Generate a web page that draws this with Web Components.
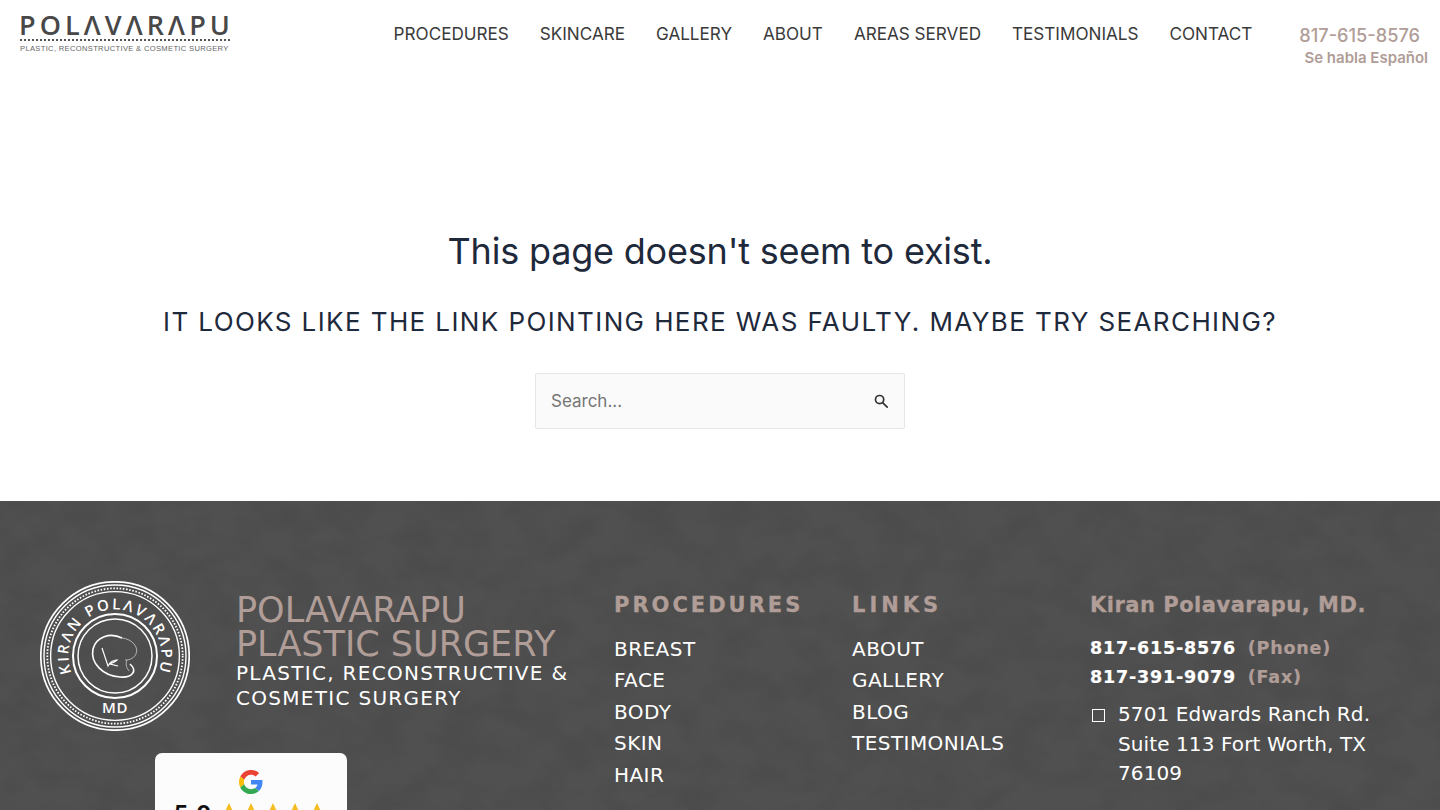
<!DOCTYPE html>
<html lang="en">
<head>
<meta charset="utf-8">
<title>Page not found</title>
<style>
  html, body { margin: 0; height: 810px; overflow: hidden; background: #fff; }
  body { font-family: Inter, "Liberation Sans", sans-serif; }
</style>
</head>
<body>
<site-header></site-header>
<not-found></not-found>
<site-footer></site-footer>

<script>
/* Top bar: logo, main nav, phone */
class SiteHeader extends HTMLElement {
  constructor() {
    super();
    const items = ['PROCEDURES', 'SKINCARE', 'GALLERY', 'ABOUT', 'AREAS SERVED', 'TESTIMONIALS', 'CONTACT'];
    this.attachShadow({ mode: 'open' }).innerHTML = `
      <style>
        :host { display: flex; height: 70px; padding: 0 12px 0 20px; justify-content: space-between; align-items: flex-start; box-sizing: border-box; background: #fff; }
        .logo { display: flex; flex-direction: column; width: 210px; margin-top: 12px; }
        .logo-name { font: 600 27px/26px "Open Sans", sans-serif; letter-spacing: 4.1px; white-space: nowrap; color: #484848; margin-left: -1px; }
        .logo-dots { height: 0; border-top: 2px dotted #555; margin-top: 1px; }
        .logo-sub { font: 400 7.6px/10px "Liberation Sans", sans-serif; letter-spacing: .32px; white-space: nowrap; margin-top: 3px; color: #666; }
        nav { display: flex; gap: 31px; margin-left: auto; margin-top: 23px; }
        a { font-size: 17.12px; line-height: 22px; color: #3a3a3a; text-decoration: none; white-space: nowrap; }
        .phone { display: flex; flex-direction: column; align-items: flex-end; margin-left: 47px; margin-top: 24px; color: #b09d97; font-weight: 500; }
        .num { font-size: 18.2px; line-height: 22px; margin-right: 8px; }
        .hab { font-size: 15px; line-height: 18px; margin-top: 3px; font-weight: 600; }
      </style>
      <div class="logo">
        <span class="logo-name">POLΛVΛRΛPU</span>
        <span class="logo-dots"></span>
        <span class="logo-sub">PLASTIC, RECONSTRUCTIVE &amp; COSMETIC SURGERY</span>
      </div>
      <nav>${items.map(i => `<a href="#">${i}</a>`).join('')}</nav>
      <div class="phone"><span class="num">817-615-8576</span><span class="hab">Se habla Español</span></div>`;
  }
}

/* 404 message with search field */
class NotFound extends HTMLElement {
  constructor() {
    super();
    this.attachShadow({ mode: 'open' }).innerHTML = `
      <style>
        :host { display: flex; flex-direction: column; align-items: center; height: 431px; box-sizing: border-box; padding-top: 156px; color: #1e293b; background: #fff; }
        h1 { font-size: 36px; line-height: 50px; font-weight: 400; letter-spacing: -.2px; margin: 0; }
        h2 { font-size: 26px; line-height: 36px; font-weight: 400; letter-spacing: 1.4px; margin: 28px 0 0; text-transform: uppercase; }
        search-box { margin-top: 33px; }
      </style>
      <h1>This page doesn't seem to exist.</h1>
      <h2>It looks like the link pointing here was faulty. Maybe try searching?</h2>
      <search-box></search-box>`;
  }
}

class SearchBox extends HTMLElement {
  constructor() {
    super();
    this.attachShadow({ mode: 'open' }).innerHTML = `
      <style>
        :host { display: flex; align-items: center; justify-content: space-between; width: 370px; height: 56px; box-sizing: border-box; padding: 0 15px 1px 15px; background: #fafafa; border: 1px solid #e6e6e6; border-radius: 2px; }
        span { font-size: 17px; color: #757575; }
        svg { width: 16px; height: 16px; display: block; margin-top: 1px; }
      </style>
      <span>Search...</span>
      <svg viewBox="0 0 16 16" fill="none" stroke="#333" stroke-width="1.7"><circle cx="6.6" cy="6.6" r="4.1"/><path d="M9.6 9.6l4.6 4.6" stroke-linecap="round"/></svg>`;
  }
}

/* Round badge in the footer */
class FooterSeal extends HTMLElement {
  constructor() {
    super();
    this.attachShadow({ mode: 'open' }).innerHTML = `
      <style>
        :host { display: block; width: 150px; height: 150px; }
        svg { display: block; }
        text { font-family: "Open Sans", sans-serif; fill: #fff; }
      </style>
      <svg width="150" height="150" viewBox="0 0 150 150" fill="none" stroke="#fff">
        <circle cx="75" cy="75" r="74.2" stroke-width="1.7"/>
        <circle cx="75" cy="75" r="71" stroke-width="1.4"/>
        <circle cx="75" cy="75" r="67.7" stroke-width="1.8" stroke-dasharray="1.6 1.6"/>
        <circle cx="75" cy="75" r="64.4" stroke-width="1.4"/>
        <circle cx="75" cy="75" r="42" stroke-width="2"/>
        <circle cx="75" cy="75" r="37" stroke-width="1.5"/>
        <defs><path id="arc" d="M75 121.5a46.5 46.5 0 1 1 0-93a46.5 46.5 0 1 1 0 93"/></defs>
        <text font-size="15" font-weight="600" letter-spacing="2.2" stroke="none"><textPath href="#arc" startOffset="50%" text-anchor="middle">KIRΛN POLΛVΛRΛPU</textPath></text>
        <text x="75" y="132" font-size="15" font-weight="600" letter-spacing=".6" text-anchor="middle" stroke="none">MD</text>
        <path d="M82 57C70 51 56 56 53 68C50 82 63 95 80 96C92 97 98 90 90 83" stroke-width="1.6"/>
        <path d="M82 57C92 58 99 66 96 73C93 79 87 79 85 79M87 79C85 84 87 87 89 90" stroke-width=".8" stroke-opacity=".7"/>
        <path d="M62 67C64 73 66 79 68 85C70 81 74 79 77 79C75 81 72 82 70 83L78 85" stroke-width="1.2"/>
      </svg>`;
  }
}

/* Review card cut off by the bottom of the window */
class GoogleCard extends HTMLElement {
  constructor() {
    super();
    const star = '<svg width="22" height="21" viewBox="0 0 24 23"><path fill="#f5bd22" d="M12 0l3.6 7.6 8.4 1-6.2 5.7 1.7 8.3L12 18.5l-7.5 4.1 1.7-8.3L0 8.6l8.4-1z"/></svg>';
    this.attachShadow({ mode: 'open' }).innerHTML = `
      <style>
        :host { display: flex; flex-direction: column; align-items: center; width: 192px; height: 57px; overflow: hidden; box-sizing: border-box; padding-top: 17px; background: #fcfcfc; border-radius: 7px 7px 0 0; }
        .g { width: 24px; height: 24px; display: block; flex: none; }
        .row { display: flex; align-items: center; margin-top: 6px; flex: none; }
        b { font: 700 22px/26px Inter, sans-serif; letter-spacing: 1px; color: #111; margin-right: 6px; }
      </style>
      <svg class="g" viewBox="0 0 48 48">
        <path fill="#EA4335" d="M24 9.5c3.54 0 6.71 1.22 9.21 3.6l6.85-6.85C35.9 2.38 30.47 0 24 0 14.62 0 6.51 5.38 2.56 13.22l7.98 6.19C12.43 13.72 17.74 9.5 24 9.5z"/>
        <path fill="#4285F4" d="M46.98 24.55c0-1.57-.15-3.09-.38-4.55H24v9.02h12.94c-.58 2.96-2.26 5.48-4.78 7.18l7.73 6c4.51-4.18 7.09-10.36 7.09-17.65z"/>
        <path fill="#FBBC05" d="M10.53 28.59c-.48-1.45-.76-2.99-.76-4.59s.27-3.14.76-4.59l-7.98-6.19C.92 16.46 0 20.12 0 24c0 3.88.92 7.54 2.56 10.78l7.97-6.19z"/>
        <path fill="#34A853" d="M24 48c6.48 0 11.93-2.13 15.89-5.81l-7.73-6c-2.15 1.45-4.92 2.3-8.16 2.3-6.26 0-11.57-4.22-13.47-9.91l-7.98 6.19C6.51 42.62 14.62 48 24 48z"/>
      </svg>
      <div class="row"><b>5.0</b>${star.repeat(5)}</div>`;
  }
}

class SiteFooter extends HTMLElement {
  constructor() {
    super();
    const procs = ['BREAST', 'FACE', 'BODY', 'SKIN', 'HAIR'];
    const links = ['ABOUT', 'GALLERY', 'BLOG', 'TESTIMONIALS'];
    const list = a => `<ul>${a.map(i => `<li>${i}</li>`).join('')}</ul>`;
    this.attachShadow({ mode: 'open' }).innerHTML = `
      <style>
        :host { display: block; position: relative; height: 309px; overflow: hidden; background: #505050; color: #fff; font-family: "DejaVu Sans", Verdana, sans-serif; }
        .tex { position: absolute; inset: 0; width: 100%; height: 100%; }
        .wrap { position: relative; display: grid; grid-template-columns: 150px 424px 238px 238px 1fr; padding: 80px 0 0 40px; }
        footer-seal { grid-column: 1; grid-row: 1; }
        .brand { grid-column: 2; grid-row: 1; padding: 11.5px 0 0 46px; }
        .brand-name { font-size: 35px; line-height: 34px; color: #b09d97; white-space: nowrap; }
        .brand-sub { font-size: 20px; line-height: 25px; letter-spacing: 1.3px; width: 345px; }
        google-card { grid-column: 1 / 3; grid-row: 2; margin: 22px 0 0 115px; }
        .col { grid-row: 1 / 3; padding-top: 11px; }
        h4 { margin: 0; font-size: 21px; line-height: 26px; font-weight: 700; color: #b09d97; letter-spacing: 3px; white-space: nowrap; -webkit-text-stroke: .3px #b09d97; }
        h4.links { letter-spacing: 4px; }
        ul { list-style: none; margin: 15.7px 0 0; padding: 0; font-size: 20px; line-height: 31.6px; letter-spacing: .45px; white-space: nowrap; }
        h4.name { letter-spacing: .5px; }
        .tel { font-size: 17.5px; line-height: 29px; font-weight: 700; letter-spacing: .8px; white-space: nowrap; -webkit-text-stroke: .2px currentColor; }
        .tel span { color: #b09d97; margin-left: 5px; }
        .tels { margin-top: 16px; }
        .addr { display: flex; margin-top: 8px; font-size: 20px; line-height: 29.5px; letter-spacing: .1px; white-space: nowrap; }
        .box { flex: none; width: 11px; height: 11px; border: 1.5px solid #fff; margin: 9px 13px 0 2px; }
      </style>
      <svg class="tex" aria-hidden="true">
        <filter id="n" x="0" y="0" width="100%" height="100%">
          <feTurbulence type="fractalNoise" baseFrequency=".025 .035" numOctaves="5" seed="7"/>
          <feColorMatrix values="0 0 0 0 0  0 0 0 0 0  0 0 0 0 0  .9 0 0 0 -.33"/>
        </filter>
        <rect width="100%" height="100%" filter="url(#n)" opacity=".13"/>
      </svg>
      <div class="wrap">
        <footer-seal></footer-seal>
        <div class="brand">
          <div class="brand-name">POLAVARAPU<br>PLASTIC SURGERY</div>
          <div class="brand-sub">PLASTIC, RECONSTRUCTIVE &amp; COSMETIC SURGERY</div>
        </div>
        <div class="col"><h4>PROCEDURES</h4>${list(procs)}</div>
        <div class="col"><h4 class="links">LINKS</h4>${list(links)}</div>
        <div class="col">
          <h4 class="name">Kiran Polavarapu, MD.</h4>
          <div class="tels">
            <div class="tel">817-615-8576 <span>(Phone)</span></div>
            <div class="tel">817-391-9079 <span>(Fax)</span></div>
          </div>
          <div class="addr"><i class="box"></i><div>5701 Edwards Ranch Rd.<br>Suite 113 Fort Worth, TX<br>76109</div></div>
        </div>
        <google-card></google-card>
      </div>`;
  }
}

customElements.define('site-header', SiteHeader);
customElements.define('search-box', SearchBox);
customElements.define('not-found', NotFound);
customElements.define('footer-seal', FooterSeal);
customElements.define('google-card', GoogleCard);
customElements.define('site-footer', SiteFooter);
</script>
</body>
</html>
